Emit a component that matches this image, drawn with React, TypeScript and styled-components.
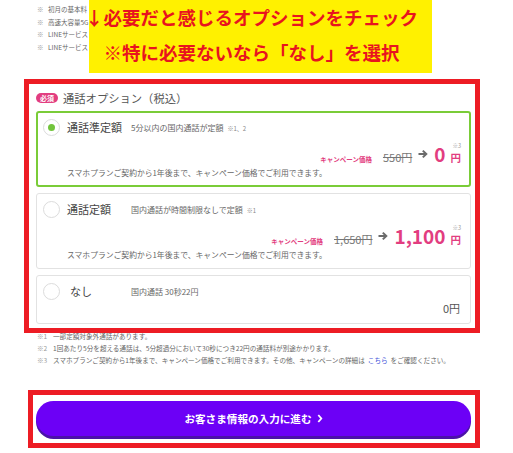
import styled, { createGlobalStyle } from "styled-components";

const GlobalStyle = createGlobalStyle`
  html, body {
    margin: 0;
    padding: 0;
    background: #fff;
  }
  body {
    font-family: "Noto Sans CJK JP", "Noto Sans", sans-serif;
    color: #555;
  }
`;

const PINK = "#e23d80";

const Page = styled.div`
  position: relative;
  width: 513px;
  height: 453px;
  overflow: hidden;
  box-sizing: border-box;
  padding: 0 42px 0 36px;
`;

// top notes (cut off where the yellow banner starts)
const NoteList = styled.ul<{ $lineHeight: number; $size: number }>`
  list-style: none;
  margin: 0;
  padding: 0 0 0 1px;
  font-size: ${(p) => p.$size}px;
  line-height: ${(p) => p.$lineHeight}px;
  color: #666;
`;
const NoteItem = styled.li`
  display: flex;
  white-space: nowrap;
`;
const NoteMark = styled.span<{ $width: number }>`
  width: ${(p) => p.$width}px;
  flex-shrink: 0;
  color: #999;
`;
const TopNotes = styled.div`
  width: 53px;
  overflow: hidden;
  padding-top: 3px;
`;
const LinkText = styled.span`
  color: #3d4fd8;
  margin: 0 3px;
`;

const Section = styled.section`
  margin-top: 36px;
`;
const SectionTitle = styled.div`
  display: flex;
  align-items: center;
  gap: 5px;
  height: 16px;
  margin-bottom: 5px;
`;
const RequiredBadge = styled.span`
  width: 22px;
  height: 10px;
  border-radius: 5px;
  background: ${PINK};
  color: #fff;
  font-size: 7px;
  font-weight: 700;
  line-height: 10px;
  text-align: center;
`;
const TitleText = styled.span`
  font-size: 11.3px;
  color: #555;
`;

const OptionList = styled.div`
  display: flex;
  flex-direction: column;
  gap: 6px;
`;
const OptionCard = styled.div<{ $selected?: boolean }>`
  border: ${(p) => (p.$selected ? "2px solid #7acc38" : "1px solid #e2e2e2")};
  padding: ${(p) => (p.$selected ? "6px 8px 7px 5px" : "7px 9px 8px 6px")};
  border-radius: 3px;
  background: #fff;
`;
const OptionHead = styled.div`
  display: flex;
  align-items: center;
  height: 17px;
`;
const Radio = styled.span<{ $checked?: boolean }>`
  width: 17px;
  height: 17px;
  box-sizing: border-box;
  border: 1px solid #dcdcdc;
  border-radius: 50%;
  display: flex;
  align-items: center;
  justify-content: center;
  margin-right: 7px;
  flex-shrink: 0;
  &::after {
    content: "";
    width: 7px;
    height: 7px;
    border-radius: 50%;
    background: ${(p) => (p.$checked ? "#72c43c" : "transparent")};
  }
`;
const OptionName = styled.span<{ $indent?: number }>`
  width: 64px;
  box-sizing: border-box;
  padding-left: ${(p) => p.$indent ?? 0}px;
  font-size: 11px;
  color: #444;
  flex-shrink: 0;
`;
const OptionSub = styled.span`
  font-size: 8px;
  color: #666;
  white-space: nowrap;
`;
const SubNote = styled.span`
  font-size: 6px;
  color: #888;
  margin-left: 4px;
`;

const PriceRow = styled.div<{ $compact?: boolean }>`
  display: flex;
  justify-content: flex-end;
  align-items: baseline;
  height: ${(p) => (p.$compact ? 13 : 20)}px;
  margin-top: ${(p) => (p.$compact ? 2 : 8)}px;
  line-height: ${(p) => (p.$compact ? 13 : 20)}px;
`;
const CampaignLabel = styled.span`
  font-size: 6.5px;
  font-weight: 700;
  color: ${PINK};
  margin-right: 11px;
`;
const OldPrice = styled.span`
  font-size: 11px;
  color: #777;
  text-decoration: line-through;
  margin-right: 6px;
`;
const ArrowIcon = styled.svg`
  width: 10px;
  height: 10px;
  margin-right: 6px;
  align-self: center;
`;
const NewPrice = styled.span`
  font-size: 19px;
  font-weight: 700;
  color: ${PINK};
`;
const Yen = styled.span`
  position: relative;
  font-size: 10.5px;
  font-weight: 700;
  color: ${PINK};
  margin-left: 5px;
`;
const Sup = styled.span`
  position: absolute;
  top: -6px;
  right: 0;
  font-size: 5.5px;
  font-weight: 400;
  line-height: 8px;
  color: #999;
`;
const PlainPrice = styled.span`
  font-size: 11px;
  color: #555;
  margin-right: 1px;
`;
const Desc = styled.div`
  margin-top: 4px;
  padding-left: 24px;
  font-size: 7.8px;
  line-height: 10px;
  color: #666;
  white-space: nowrap;
`;

const BottomNotes = styled.div`
  margin-top: 6px;
`;

const NextButton = styled.button`
  display: flex;
  align-items: center;
  justify-content: center;
  width: 100%;
  height: 35px;
  margin-top: 35px;
  border: none;
  border-radius: 18px;
  background: #6c00f6;
  box-shadow: 0 3px 0 #4b12a8;
  color: #fff;
  font-family: inherit;
  font-size: 10.6px;
  font-weight: 700;
  cursor: pointer;
`;
const Chevron = styled.svg`
  width: 6px;
  height: 9px;
  margin-left: 5px;
`;

// annotation overlays
const YellowBanner = styled.div`
  position: absolute;
  left: 89px;
  top: 0;
  width: 343px;
  height: 73px;
  box-sizing: border-box;
  padding-right: 18px;
  background: #fff100;
  display: flex;
  flex-direction: column;
  align-items: center;
`;
const BannerLine = styled.div`
  font-size: 18.5px;
  font-weight: 700;
  line-height: 35px;
  color: #e8141f;
  white-space: nowrap;
`;
const RedFrame = styled.div<{ $l: number; $t: number; $w: number; $h: number }>`
  position: absolute;
  left: ${(p) => p.$l}px;
  top: ${(p) => p.$t}px;
  width: ${(p) => p.$w}px;
  height: ${(p) => p.$h}px;
  box-sizing: border-box;
  border: 5px solid #ed1c24;
  pointer-events: none;
`;

const Arrow = () => (
  <ArrowIcon viewBox="0 0 10 10">
    <path d="M0.5 5h7.5M4.8 1.6L8.3 5 4.8 8.4" fill="none" stroke="#6b6b6b" strokeWidth="2" />
  </ArrowIcon>
);

type Opt = {
  name: string;
  sub: string;
  subNote?: string;
  old?: string;
  price: string;
  selected?: boolean;
};

const options: Opt[] = [
  { name: "通話準定額", sub: "5分以内の国内通話が定額", subNote: "※1、2", old: "550円", price: "0", selected: true },
  { name: "通話定額", sub: "国内通話が時間制限なしで定額", subNote: "※1", old: "1,650円", price: "1,100" },
  { name: "なし", sub: "国内通話 30秒22円", price: "0円" },
];

export default function App() {
  return (
    <Page>
      <GlobalStyle />
      <TopNotes>
        <NoteList $size={6.5} $lineHeight={12.7}>
          <NoteItem><NoteMark $width={11}>※</NoteMark>初月の基本料</NoteItem>
          <NoteItem><NoteMark $width={11}>※</NoteMark>高速大容量5G</NoteItem>
          <NoteItem><NoteMark $width={11}>※</NoteMark>LINEサービス</NoteItem>
          <NoteItem><NoteMark $width={11}>※</NoteMark>LINEサービス</NoteItem>
        </NoteList>
      </TopNotes>

      <Section>
        <SectionTitle>
          <RequiredBadge>必須</RequiredBadge>
          <TitleText>通話オプション（税込）</TitleText>
        </SectionTitle>
        <OptionList>
          {options.map((o) => (
            <OptionCard key={o.name} $selected={o.selected}>
              <OptionHead>
                <Radio $checked={o.selected} />
                <OptionName $indent={o.old ? 0 : 3}>{o.name}</OptionName>
                <OptionSub>
                  {o.sub}
                  {o.subNote && <SubNote>{o.subNote}</SubNote>}
                </OptionSub>
              </OptionHead>
              {o.old ? (
                <>
                  <PriceRow>
                    <CampaignLabel>キャンペーン価格</CampaignLabel>
                    <OldPrice>{o.old}</OldPrice>
                    <Arrow />
                    <NewPrice>{o.price}</NewPrice>
                    <Yen>
                      円<Sup>※3</Sup>
                    </Yen>
                  </PriceRow>
                  <Desc>スマホプランご契約から1年後まで、キャンペーン価格でご利用できます。</Desc>
                </>
              ) : (
                <PriceRow $compact>
                  <PlainPrice>{o.price}</PlainPrice>
                </PriceRow>
              )}
            </OptionCard>
          ))}
        </OptionList>
      </Section>

      <BottomNotes>
        <NoteList $size={6.6} $lineHeight={12}>
          <NoteItem><NoteMark $width={16}>※1</NoteMark>一部定額対象外通話があります。</NoteItem>
          <NoteItem><NoteMark $width={16}>※2</NoteMark>1回あたり5分を超える通話は、5分超過分において30秒につき22円の通話料が別途かかります。</NoteItem>
          <NoteItem>
            <NoteMark $width={16}>※3</NoteMark>
            スマホプランご契約から1年後まで、キャンペーン価格でご利用できます。その他、キャンペーンの詳細は
            <LinkText>こちら</LinkText>をご確認ください。
          </NoteItem>
        </NoteList>
      </BottomNotes>

      <NextButton>
        お客さま情報の入力に進む
        <Chevron viewBox="0 0 6 9">
          <path d="M1.3 1l3 3.5-3 3.5" fill="none" stroke="#fff" strokeWidth="1.8" />
        </Chevron>
      </NextButton>

      <YellowBanner>
        <BannerLine>↓必要だと感じるオプションをチェック</BannerLine>
        <BannerLine>※特に必要ないなら「なし」を選択</BannerLine>
      </YellowBanner>
      <RedFrame $l={24} $t={79} $w={456} $h={254} />
      <RedFrame $l={28} $t={390} $w={452} $h={58} />
    </Page>
  );
}
